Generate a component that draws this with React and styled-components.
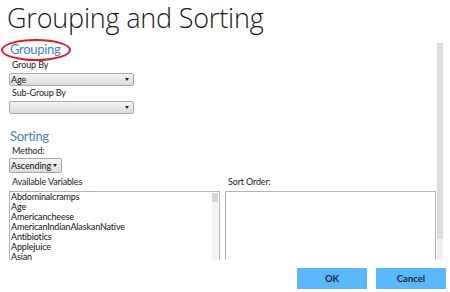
import React from "react";
import styled, { createGlobalStyle } from "styled-components";

const GlobalStyle = createGlobalStyle`
  html, body {
    margin: 0;
    padding: 0;
    background: #ffffff;
  }
  body {
    font-family: Lato, "Open Sans", sans-serif;
    color: #1e1e1e;
  }
`;

const variables = [
  "Abdominalcramps",
  "Age",
  "Americancheese",
  "AmericanIndianAlaskanNative",
  "Antibiotics",
  "Applejuice",
  "Asian",
];

const App = () => {
  return (
    <Page>
      <GlobalStyle />
      <Title>Grouping and Sorting</Title>
      <Body>
        <Content>
          <Heading circled>Grouping</Heading>
          <Label>Group By</Label>
          <Select width={125}>
            <span>Age</span>
            <Arrow />
          </Select>
          <Label>Sub-Group By</Label>
          <Select width={125}>
            <span />
            <Arrow />
          </Select>
          <Heading spaced>Sorting</Heading>
          <Label short>Method:</Label>
          <Select width={53} tall>
            <span>Ascending</span>
            <Arrow />
          </Select>
          <Lists>
            <ListColumn>
              <Label>Available Variables</Label>
              <ListBox>
                <Items>
                  {variables.map((v) => (
                    <Item key={v}>{v}</Item>
                  ))}
                </Items>
                <ListScroll>
                  <ListThumb />
                </ListScroll>
              </ListBox>
            </ListColumn>
            <ListColumn>
              <Label>Sort Order:</Label>
              <ListBox />
            </ListColumn>
          </Lists>
        </Content>
        <ScrollTrack>
          <ScrollThumb />
        </ScrollTrack>
      </Body>
      <Footer>
        <Button>OK</Button>
        <Button>Cancel</Button>
      </Footer>
    </Page>
  );
};

const Page = styled.div`
  width: 450px;
  height: 292px;
  display: flex;
  flex-direction: column;
  overflow: hidden;
`;

const Title = styled.h1`
  flex-shrink: 0;
  margin: 0;
  padding: 0 0 0 7px;
  height: 39px;
  font-family: "Open Sans", sans-serif;
  font-size: 27px;
  line-height: 36px;
  font-weight: 300;
  color: #1a1a1a;
  letter-spacing: -0.2px;
`;

const Body = styled.div`
  flex-shrink: 0;
  display: flex;
  height: 221px;
  overflow: hidden;
`;

const Content = styled.div`
  width: 427px;
  margin-left: 9px;
  padding-top: 2px;
`;

const Heading = styled.div`
  position: relative;
  width: fit-content;
  margin-left: 1px;
  font-size: 13px;
  line-height: 17px;
  height: 17px;
  margin-top: ${({ spaced }) => (spaced ? 14 : 0)}px;
  color: #4a7fc5;
  letter-spacing: -0.3px;

  ${({ circled }) =>
    circled &&
    `
    &::after {
      content: "";
      position: absolute;
      left: -9px;
      top: -2px;
      width: 70px;
      height: 22px;
      box-sizing: border-box;
      border: 2px solid #e01a22;
      border-radius: 50%;
    }
  `}
`;

const Label = styled.div`
  font-size: 9px;
  letter-spacing: -0.15px;
  line-height: ${({ short }) => (short ? 12 : 14)}px;
  height: ${({ short }) => (short ? 12 : 14)}px;
  padding-left: 3px;
  color: #222;
  white-space: nowrap;
`;

const Select = styled.div`
  box-sizing: border-box;
  width: ${({ width }) => width}px;
  height: ${({ tall }) => (tall ? 15 : 13)}px;
  margin: 1px 0 ${({ tall }) => (tall ? 2 : 0)}px;
  border: 1px solid #a9a9a9;
  border-radius: 2px;
  background: linear-gradient(#f4f4f4, #dcdcdc);
  display: flex;
  align-items: center;
  justify-content: space-between;
  padding: 0 4px 0 1px;
  font-size: 9px;
  letter-spacing: -0.1px;
  color: #111;
`;

const Arrow = styled.i`
  width: 0;
  height: 0;
  border-left: 2px solid transparent;
  border-right: 2px solid transparent;
  border-top: 3px solid #222;
`;

const Lists = styled.div`
  width: 427px;
  display: flex;
  gap: 5px;
`;

const ListColumn = styled.div`
  flex: 1;
  display: flex;
  flex-direction: column;
`;

const ListBox = styled.div`
  box-sizing: border-box;
  height: 120px;
  margin-top: 2px;
  border: 1px solid #b4b4b4;
  display: flex;
`;

const Items = styled.div`
  flex: 1;
  padding: 0 0 0 1px;
`;

const Item = styled.div`
  font-size: 9px;
  letter-spacing: -0.15px;
  line-height: 10px;
  height: 10px;
  color: #111;
  white-space: nowrap;
`;

const ListScroll = styled.div`
  width: 6px;
  margin: 1px 1px 0 0;
  background: #f2f2f2;
`;

const ListThumb = styled.div`
  height: 9px;
  background: #d4d4d4;
`;

const ScrollTrack = styled.div`
  width: 6px;
  margin: 4px 7px 0 1px;
  background: #f0f0f0;
`;

const ScrollThumb = styled.div`
  height: 196px;
  background: #dcdcdc;
`;

const Footer = styled.div`
  flex-shrink: 0;
  display: flex;
  justify-content: flex-end;
  gap: 9px;
  padding: 8px 4px 0 0;
`;

const Button = styled.div`
  width: 70px;
  height: 21px;
  background: #5cb7fb;
  display: flex;
  align-items: center;
  justify-content: center;
  font-size: 9.5px;
  font-weight: 700;
  color: #1a2a3a;
`;

export default App;
